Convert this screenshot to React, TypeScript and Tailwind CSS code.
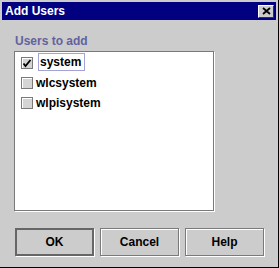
import React from 'react';

const USERS = [
  { name: 'system', checked: true, focused: true },
  { name: 'wlcsystem', checked: false, focused: false },
  { name: 'wlpisystem', checked: false, focused: false },
];

function CheckBox({ checked }: { checked: boolean }) {
  return (
    <span className="w-[12px] h-[12px] shrink-0 border border-[#7a7a7a] bg-[#d4d4d4] shadow-[inset_1px_1px_0_#ffffff,1px_1px_0_#ffffff] flex items-center justify-center">
      {checked && (
        <svg width="10" height="10" viewBox="0 0 10 10">
          <path d="M1.5 5.5 L3.5 8 L8.5 2" fill="none" stroke="#000" strokeWidth="1.8" />
        </svg>
      )}
    </span>
  );
}

function Button({ label, isDefault }: { label: string; isDefault?: boolean }) {
  return (
    <button
      className={`w-[79px] h-[28px] bg-[#cccccc] text-[12px] font-bold text-black flex items-center justify-center ${
        isDefault
          ? 'border-2 border-[#666666] shadow-[1px_1px_0_#ffffff]'
          : 'border border-[#7a7a7a] shadow-[inset_1px_1px_0_#ffffff,1px_1px_0_#ffffff]'
      }`}
    >
      {label}
    </button>
  );
}

export default function App() {
  return (
    <div
      className="w-[279px] h-[268px] bg-[#cccccc] border-r border-b border-black pt-[2px] pl-[2px] pr-[2px] flex flex-col"
      style={{ fontFamily: '"Liberation Sans", Arial, sans-serif' }}
    >
      {/* Title bar */}
      <div className="h-[18px] bg-[#000080] flex items-center justify-between pl-[3px] pr-[2px]">
        <span className="text-white font-bold text-[12px] leading-none">Add Users</span>
        <span className="w-[16px] h-[13px] bg-[#cccccc] border-t border-l border-white border-r border-b border-r-[#333333] border-b-[#333333] flex items-center justify-center">
          <svg width="9" height="8" viewBox="0 0 9 8">
            <path d="M1 1 L8 7 M8 1 L1 7" stroke="#000" strokeWidth="1.8" />
          </svg>
        </span>
      </div>

      {/* Body */}
      <div className="flex flex-col pl-[12px] pt-[14px]">
        <div className="pl-[1px] text-[12px] leading-[14px] font-bold text-[#62629e]">Users to add</div>
        <div className="mt-[3px] w-[200px] h-[160px] bg-white border border-[#7a7a7a] shadow-[1px_1px_0_#ffffff] pt-[1px] pl-[6px] flex flex-col">
          {USERS.map((u) => (
            <div key={u.name} className="h-[20px] flex items-center text-[12px] font-bold text-black">
              <CheckBox checked={u.checked} />
              {u.focused ? (
                <span className="ml-[5px] self-start h-[18px] leading-[16px] border border-[#a3a3d6] pl-[1px] pr-[3px]">
                  {u.name}
                </span>
              ) : (
                <span className="ml-[3px] leading-[20px]">{u.name}</span>
              )}
            </div>
          ))}
        </div>

        <div className="mt-[17px] pl-[1px] flex gap-[6px]">
          <Button label="OK" isDefault />
          <Button label="Cancel" />
          <Button label="Help" />
        </div>
      </div>
    </div>
  );
}
